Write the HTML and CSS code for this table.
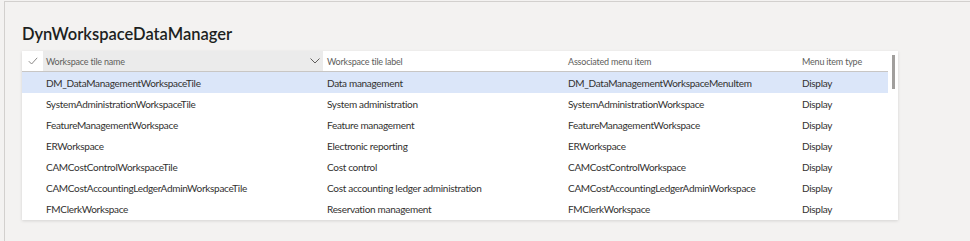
FILE: index.html
```html
<!DOCTYPE html>
<html lang="en">
<head>
  <meta charset="UTF-8" />
  <title>DynWorkspaceDataManager</title>
  <link rel="stylesheet" href="styles.css">
</head>
<body>

<div class="page">
  <h2 class="title">DynWorkspaceDataManager</h2>

  <div class="grid-card">
    <div class="grid">
      <div class="row head">
        <div class="cell check">
          <svg width="10" height="8" viewBox="0 0 10 8"><path d="M0.8 4.2 L3.6 7 L9.2 0.8" fill="none" stroke="#8a8886" stroke-width="1"/></svg>
        </div>
        <div class="cell sorted">
          <span>Workspace tile name</span>
          <svg width="10" height="6" viewBox="0 0 10 6"><path d="M0.5 0.5 L5 5 L9.5 0.5" fill="none" stroke="#605e5c" stroke-width="1"/></svg>
        </div>
        <div class="cell">Workspace tile label</div>
        <div class="cell">Associated menu item</div>
        <div class="cell">Menu item type</div>
      </div>

      <div class="row selected">
        <div class="cell check"></div>
        <div class="cell">DM_DataManagementWorkspaceTile</div>
        <div class="cell">Data management</div>
        <div class="cell">DM_DataManagementWorkspaceMenuItem</div>
        <div class="cell">Display</div>
      </div>
      <div class="row">
        <div class="cell check"></div>
        <div class="cell">SystemAdministrationWorkspaceTile</div>
        <div class="cell">System administration</div>
        <div class="cell">SystemAdministrationWorkspace</div>
        <div class="cell">Display</div>
      </div>
      <div class="row">
        <div class="cell check"></div>
        <div class="cell">FeatureManagementWorkspace</div>
        <div class="cell">Feature management</div>
        <div class="cell">FeatureManagementWorkspace</div>
        <div class="cell">Display</div>
      </div>
      <div class="row">
        <div class="cell check"></div>
        <div class="cell">ERWorkspace</div>
        <div class="cell">Electronic reporting</div>
        <div class="cell">ERWorkspace</div>
        <div class="cell">Display</div>
      </div>
      <div class="row">
        <div class="cell check"></div>
        <div class="cell">CAMCostControlWorkspaceTile</div>
        <div class="cell">Cost control</div>
        <div class="cell">CAMCostControlWorkspace</div>
        <div class="cell">Display</div>
      </div>
      <div class="row">
        <div class="cell check"></div>
        <div class="cell">CAMCostAccountingLedgerAdminWorkspaceTile</div>
        <div class="cell">Cost accounting ledger administration</div>
        <div class="cell">CAMCostAccountingLedgerAdminWorkspace</div>
        <div class="cell">Display</div>
      </div>
      <div class="row">
        <div class="cell check"></div>
        <div class="cell">FMClerkWorkspace</div>
        <div class="cell">Reservation management</div>
        <div class="cell">FMClerkWorkspace</div>
        <div class="cell">Display</div>
      </div>
    </div>
    <div class="scrollbar"><div class="thumb"></div></div>
  </div>
</div>

</body>
</html>
```

FILE: styles.css
```css
* {
  margin: 0;
  padding: 0;
  box-sizing: border-box;
}

body {
  font-family: Lato, 'Liberation Sans', sans-serif;
  background: #f3f2f1;
  color: #323130;
  height: 241px;
  overflow: hidden;
}

.page {
  margin-top: 1px;
  margin-left: 4px;
  height: 240px;
  border-top: 1px solid #d2d0ce;
  border-left: 1px solid #d2d0ce;
  padding: 21px 0 0 17px;
}

.title {
  font-size: 16.5px;
  font-weight: 600;
  color: #201f1e;
  line-height: 23px;
  height: 28px;
}

.grid-card {
  width: 876px;
  background: #fff;
  box-shadow: 0 1px 3px rgba(0, 0, 0, 0.13);
  display: flex;
  padding-bottom: 1px;
}

.grid {
  width: 866px;
}

.row {
  display: grid;
  grid-template-columns: 21px 280px 241px 234px 90px;
  height: 21px;
  align-items: center;
  font-size: 10px;
  letter-spacing: -0.3px;
  padding-top: 1px;
}

.row.head {
  height: 21px;
  padding-top: 0;
  border-bottom: 1px solid #c8c6c4;
  font-size: 9px;
  letter-spacing: -0.2px;
  color: #605e5c;
}

.row.selected {
  background: #dbe6f9;
}

.cell {
  padding-left: 4px;
  white-space: nowrap;
  height: 100%;
  display: flex;
  align-items: center;
}

.cell.check {
  padding-left: 6px;
}

.row .cell:nth-child(2) {
  padding-left: 3px;
}

.cell.sorted {
  background: #ebebeb;
  justify-content: space-between;
  padding-right: 3px;
}

.scrollbar {
  width: 10px;
  padding: 4px 0 0 4px;
}

.thumb {
  width: 3px;
  height: 34px;
  background: #a19f9d;
}
```
